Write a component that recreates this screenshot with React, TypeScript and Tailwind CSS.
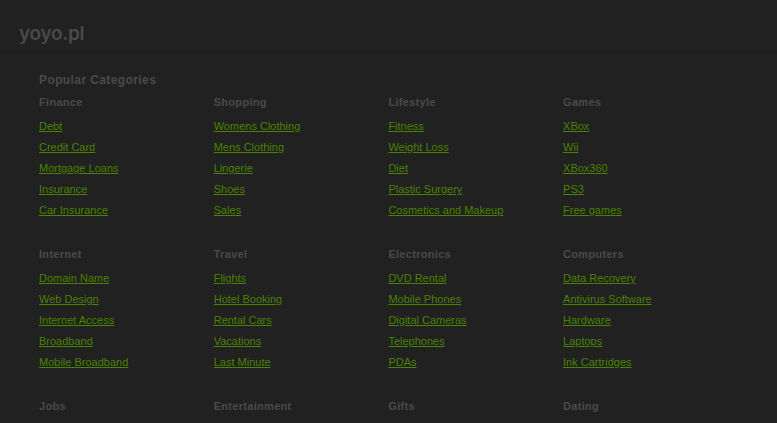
const categories = [
  { title: "Finance", links: ["Debt", "Credit Card", "Mortgage Loans", "Insurance", "Car Insurance"] },
  { title: "Shopping", links: ["Womens Clothing", "Mens Clothing", "Lingerie", "Shoes", "Sales"] },
  { title: "Lifestyle", links: ["Fitness", "Weight Loss", "Diet", "Plastic Surgery", "Cosmetics and Makeup"] },
  { title: "Games", links: ["XBox", "Wii", "XBox360", "PS3", "Free games"] },
  { title: "Internet", links: ["Domain Name", "Web Design", "Internet Access", "Broadband", "Mobile Broadband"] },
  { title: "Travel", links: ["Flights", "Hotel Booking", "Rental Cars", "Vacations", "Last Minute"] },
  { title: "Electronics", links: ["DVD Rental", "Mobile Phones", "Digital Cameras", "Telephones", "PDAs"] },
  { title: "Computers", links: ["Data Recovery", "Antivirus Software", "Hardware", "Laptops", "Ink Cartridges"] },
  { title: "Jobs", links: [] },
  { title: "Entertainment", links: [] },
  { title: "Gifts", links: [] },
  { title: "Dating", links: [] },
];

export default function App() {
  return (
    <div className="h-screen overflow-hidden bg-[#212121] font-['Liberation_Sans',sans-serif]">
      <header className="h-[53px] border-b border-[#1a1a1a] pl-[19px] pt-[20px]">
        <span className="block font-['Inter',sans-serif] text-[19px] leading-[28px] font-semibold tracking-[-0.3px] text-[#4a4a4a]">
          yoyo.pl
        </span>
      </header>
      <main className="pl-[39px] pt-[19px]">
        <h1 className="text-[12px] leading-[16px] font-bold tracking-[0.4px] text-[#4a4a4a]">
          Popular Categories
        </h1>
        <div className="mt-[7px] grid grid-cols-[174.7px_174.7px_174.7px_174.7px]">
          {categories.map((cat) => (
            <section key={cat.title} className="h-[152px]">
              <h2 className="text-[11px] leading-[14px] font-bold tracking-[0.3px] text-[#4a4a4a]">
                {cat.title}
              </h2>
              <ul className="mt-[10px] flex flex-col gap-[7px]">
                {cat.links.map((link) => (
                  <li key={link} className="text-[11px] leading-[14px]">
                    <a href="#" className="text-[#4a8200] underline">
                      {link}
                    </a>
                  </li>
                ))}
              </ul>
            </section>
          ))}
        </div>
      </main>
    </div>
  );
}
